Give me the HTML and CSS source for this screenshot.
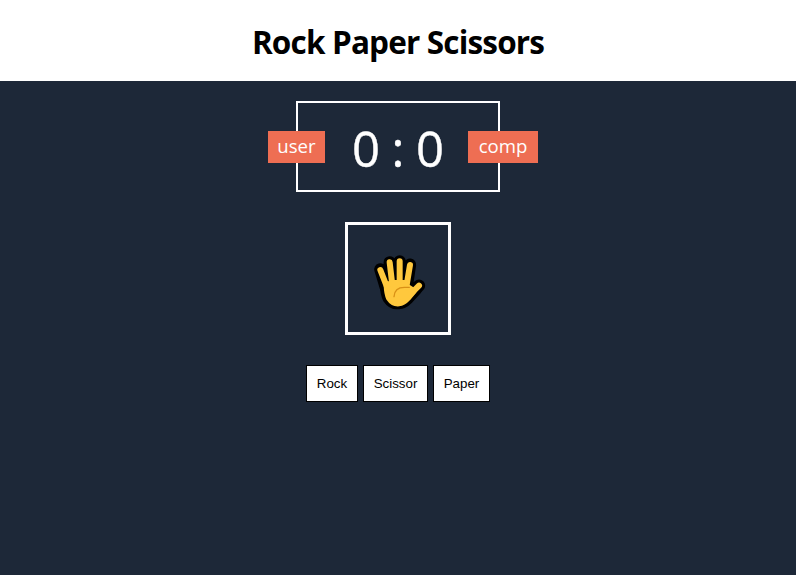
FILE: index.html
```html
<!DOCTYPE html>
<html lang="en">
<head>
<meta charset="utf-8">
<title>Rock Paper Scissors</title>
<link rel="stylesheet" href="styles.css">
</head>
<body>
<header><h1>Rock Paper Scissors</h1></header>
<main>
  <section class="score">
    <span class="badge user"><span>user</span></span>
    <p class="points"><span>0</span><span class="colon">:</span><span>0</span></p>
    <span class="badge comp"><span>comp</span></span>
  </section>
  <section class="choice">
    <svg class="hand" viewBox="0 0 210 210" aria-label="Hand">
      <g stroke-linecap="round" stroke-linejoin="round" fill="none">
        <g stroke="#000" stroke-width="37">
          <path d="M46 73L62 126M74 52L80 120M104 49V120M135 59L126 120M162 122L128 156"/>
          <path d="M63 120Q64 146 71 159Q83 177 102 174Q114 174 128 160L152 134L126 124L112 108H80Z" fill="#000"/>
        </g>
        <g stroke="#ffc83d" stroke-width="18">
          <path d="M46 75L66 126M74 52L82 120M104 49V120M135 60L125 120M162 122L128 156"/>
          <path d="M65 122Q66 146 72 159Q84 177 102 175Q115 174 128 160L146 138L124 124L118 114H80Z" fill="#ffc83d"/>
        </g>
        <path d="M87 155C88 137 100 127 118 127H133" stroke="#d99116" stroke-width="4"/>
      </g>
    </svg>
  </section>
  <div class="actions">
    <button class="rock">Rock</button>
    <button class="scissor">Scissor</button>
    <button class="paper">Paper</button>
  </div>
</main>
</body>
</html>
```
FILE: styles.css
```css
* { box-sizing: border-box; }
body {
  margin: 0;
  height: 575px;
  display: flex;
  flex-direction: column;
  background: #1d2838;
  font-family: "Segoe UI", "Open Sans", "Noto Sans", sans-serif;
}
header {
  height: 81px;
  padding-top: 2px;
  background: #fff;
  display: flex;
  justify-content: center;
  align-items: center;
}
h1 {
  margin: 0;
  font-size: 31.5px;
  line-height: 43px;
  font-weight: 700;
  letter-spacing: -0.83px;
  color: #000;
  white-space: nowrap;
}
main {
  display: flex;
  flex-direction: column;
  align-items: center;
  padding-top: 20px;
}
.score {
  position: relative;
  width: 204px;
  height: 91px;
  border: 2px solid #fff;
  color: #fff;
}
.points {
  margin: 0;
  display: flex;
  justify-content: center;
  font-size: 49px;
  line-height: 91px;
  -webkit-text-stroke: 0.4px #fff;
}
.colon { width: 36px; text-align: center; }
.badge {
  position: absolute;
  top: 28px;
  height: 32px;
  display: flex;
  justify-content: center;
  background: #ee6e53;
  font-size: 18.6px;
  line-height: 30px;
}
.user { left: -30px; width: 57px; }
.comp { right: -40px; width: 70px; }
.choice {
  width: 106px;
  height: 113px;
  margin-top: 30px;
  padding: 20px 17px;
  border: 3px solid #fff;
}
.hand { display: block; width: 70px; height: 70px; }
.actions {
  display: flex;
  gap: 5px;
  margin-top: 30px;
}
button {
  height: 37px;
  padding: 0;
  border: 1px solid #000;
  background: #fff;
  color: #000;
  font: 13.333px/35px "Liberation Sans", Arial, sans-serif;
}
.rock { width: 52px; }
.scissor { width: 65px; }
.paper { width: 57px; }
```
